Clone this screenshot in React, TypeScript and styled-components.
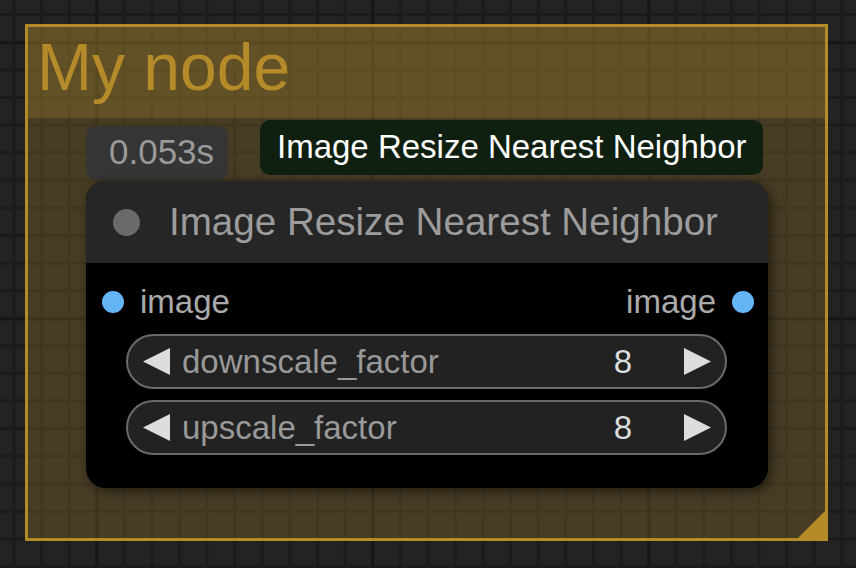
import styled, { createGlobalStyle } from "styled-components";

const GlobalStyle = createGlobalStyle`
  html, body {
    margin: 0;
    padding: 0;
    background: #232323;
  }
  body {
    font-family: "Liberation Sans", Arial, sans-serif;
  }
`

const widgets = [
    { label: "downscale_factor", value: "8" },
    { label: "upscale_factor", value: "8" },
]

const Arrow = ({ dir }: { dir: "left" | "right" }) => (
    <ArrowSvg viewBox="0 0 27 27">
        {dir === "left"
            ? <polygon points="27,0 27,27 0,13.5" fill="#dddddd" />
            : <polygon points="0,0 0,27 27,13.5" fill="#dddddd" />}
    </ArrowSvg>
)

export default () => {
    return (
        <Canvas>
            <GlobalStyle />
            <Group>
                <GroupTitle>My node</GroupTitle>
                <GroupBody>
                    <NodeWrap>
                        <Badge>0.053s</Badge>
                        <Tooltip>Image Resize Nearest Neighbor</Tooltip>
                        <Node>
                            <NodeTitle>
                                <TitleDot />
                                <TitleText>Image Resize Nearest Neighbor</TitleText>
                            </NodeTitle>
                            <NodeBody>
                                <SlotRow>
                                    <Slot>
                                        <SlotDot />
                                        <SlotLabel>image</SlotLabel>
                                    </Slot>
                                    <Slot>
                                        <SlotLabel>image</SlotLabel>
                                        <SlotDot />
                                    </Slot>
                                </SlotRow>
                                {widgets.map((w) => (
                                    <Widget key={w.label}>
                                        <Arrow dir="left" />
                                        <WidgetLabel>{w.label}</WidgetLabel>
                                        <WidgetValue>{w.value}</WidgetValue>
                                        <Arrow dir="right" />
                                    </Widget>
                                ))}
                            </NodeBody>
                        </Node>
                    </NodeWrap>
                    <ResizeHandle />
                </GroupBody>
            </Group>
        </Canvas>
    )
}

const Canvas = styled.div`
  width: 856px;
  height: 568px;
  box-sizing: border-box;
  padding: 24px 0 0 25px;
  overflow: hidden;
  background-color: #232323;
  background-image:
    linear-gradient(to right, #161616 0 2.7px, transparent 2.7px),
    linear-gradient(to bottom, #161616 0 2.7px, transparent 2.7px),
    linear-gradient(to right, #1b1b1b 0 2.7px, transparent 2.7px),
    linear-gradient(to bottom, #1b1b1b 0 2.7px, transparent 2.7px);
  background-size: 276px 100%, 100% 276px, 27.6px 100%, 100% 27.6px;
  background-position: 95.3px 0, 0 41.4px, 12.5px 0, 0 13.2px;
`

const Group = styled.div`
  width: 803px;
  height: 517px;
  box-sizing: border-box;
  border: 3px solid #b58b2a;
  background: rgba(181, 139, 42, 0.25);
  display: flex;
  flex-direction: column;
`

const GroupTitle = styled.div`
  height: 91px;
  flex-shrink: 0;
  padding-left: 9px;
  background: rgba(181, 139, 42, 0.25);
  color: #b58b2a;
  font-size: 66px;
  line-height: 80px;
  white-space: nowrap;
`

const GroupBody = styled.div`
  flex: 1;
  position: relative;
  padding: 8px 0 0 58px;
`

const NodeWrap = styled.div`
  position: relative;
  width: 682px;
`

const Badge = styled.div`
  width: 142px;
  height: 54px;
  box-sizing: border-box;
  padding-left: 23px;
  border-radius: 10px;
  background: #353535;
  color: #9a9a9a;
  font-size: 35px;
  line-height: 52px;
`

const Tooltip = styled.div`
  position: absolute;
  left: 174px;
  top: -6px;
  width: 503px;
  height: 55px;
  box-sizing: border-box;
  padding-left: 17px;
  border-radius: 10px;
  background: #0f1f10;
  color: #ffffff;
  font-size: 33px;
  line-height: 53px;
  white-space: nowrap;
`

const Node = styled.div`
  margin-top: 1px;
  width: 682px;
  height: 307px;
  border-radius: 20px;
  overflow: hidden;
  background: #000;
  box-shadow: 3px 3px 12px rgba(0, 0, 0, 0.55);
  display: flex;
  flex-direction: column;
`

const NodeTitle = styled.div`
  height: 82px;
  flex-shrink: 0;
  background: #262626;
  display: flex;
  align-items: center;
  padding-left: 27px;
`

const TitleDot = styled.div`
  width: 27px;
  height: 27px;
  border-radius: 50%;
  background: #6a6a6a;
  margin-right: 29px;
`

const TitleText = styled.div`
  color: #9c9c9c;
  font-size: 38.6px;
  line-height: 82px;
  white-space: nowrap;
`

const NodeBody = styled.div`
  flex: 1;
  padding-top: 11px;
  display: flex;
  flex-direction: column;
`

const SlotRow = styled.div`
  height: 55px;
  display: flex;
  justify-content: space-between;
  align-items: center;
  padding: 0 14px 0 16px;
  margin-bottom: 5px;
`

const Slot = styled.div`
  display: flex;
  align-items: center;
  gap: 16px;
`

const SlotDot = styled.div`
  width: 22px;
  height: 22px;
  border-radius: 50%;
  background: #64b5f6;
`

const SlotLabel = styled.div`
  color: #aaaaaa;
  font-size: 33px;
  line-height: 55px;
`

const Widget = styled.div`
  margin: 0 0 11px 40px;
  width: 601px;
  height: 55px;
  box-sizing: border-box;
  border: 2px solid #6a6a6a;
  border-radius: 28px;
  background: #222222;
  display: flex;
  align-items: center;
  padding: 0 14px 0 15px;
`

const ArrowSvg = styled.svg`
  width: 27px;
  height: 27px;
  flex-shrink: 0;
`

const WidgetLabel = styled.div`
  flex: 1;
  margin-left: 12px;
  color: #999999;
  font-size: 33px;
  line-height: 51px;
`

const WidgetValue = styled.div`
  margin-right: 52px;
  color: #dddddd;
  font-size: 33px;
  line-height: 51px;
`

const ResizeHandle = styled.div`
  position: absolute;
  right: 0;
  bottom: 0;
  width: 27px;
  height: 27px;
  background: #b58b2a;
  clip-path: polygon(100% 0, 100% 100%, 0 100%);
`
